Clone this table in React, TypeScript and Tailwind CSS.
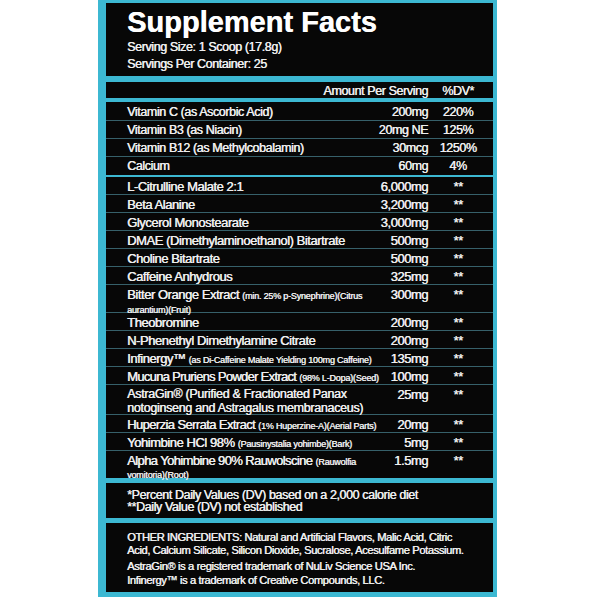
import React from "react";

type R = {
  n: React.ReactNode;
  l2?: React.ReactNode;
  a: string;
  d: string;
  tall?: "h-[28px]" | "h-[30px]" | "h-[26px]";
  l1c?: string;
  l2c?: string;
};

const S = ({ children }: { children: React.ReactNode }) => (
  <span className="text-[9px] tracking-[-0.2px]">{children}</span>
);

const vit: R[] = [
  { n: "Vitamin C (as Ascorbic Acid)", a: "200mg", d: "220%" },
  { n: "Vitamin B3 (as Niacin)", a: "20mg NE", d: "125%" },
  { n: "Vitamin B12 (as Methylcobalamin)", a: "30mcg", d: "1250%" },
  { n: "Calcium", a: "60mg", d: "4%" },
];

const ing: R[] = [
  { n: "L-Citrulline Malate 2:1", a: "6,000mg", d: "**" },
  { n: "Beta Alanine", a: "3,200mg", d: "**" },
  { n: "Glycerol Monostearate", a: "3,000mg", d: "**" },
  { n: "DMAE (Dimethylaminoethanol) Bitartrate", a: "500mg", d: "**" },
  { n: "Choline Bitartrate", a: "500mg", d: "**" },
  { n: "Caffeine Anhydrous", a: "325mg", d: "**" },
  {
    n: (
      <>
        Bitter Orange Extract <S>(min. 25% p-Synephrine)(Citrus</S>
      </>
    ),
    l2: <S>aurantium)(Fruit)</S>,
    a: "300mg",
    d: "**",
    tall: "h-[28px]",
    l1c: "pt-[3px] leading-[13px]",
    l2c: "leading-[11px]",
  },
  { n: "Theobromine", a: "200mg", d: "**" },
  { n: "N-Phenethyl Dimethylamine Citrate", a: "200mg", d: "**" },
  {
    n: (
      <>
        Infinergy™ <S>(as Di-Caffeine Malate Yielding 100mg Caffeine)</S>
      </>
    ),
    a: "135mg",
    d: "**",
  },
  {
    n: (
      <>
        <span className="tracking-[-0.7px]">Mucuna Pruriens Powder Extract</span>{" "}
        <S>(98% L-Dopa)(Seed)</S>
      </>
    ),
    a: "100mg",
    d: "**",
  },
  {
    n: "AstraGin® (Purified & Fractionated Panax",
    l2: "notoginseng and Astragalus membranaceus)",
    a: "25mg",
    d: "**",
    tall: "h-[30px]",
    l1c: "pt-[2px] leading-[14px] text-[12.5px] tracking-[-0.3px]",
    l2c: "leading-[14px] text-[12.5px] tracking-[-0.3px]",
  },
  {
    n: (
      <>
        <span className="tracking-[-0.6px]">Huperzia Serrata Extract</span>{" "}
        <S>(1% Huperzine-A)(Aerial Parts)</S>
      </>
    ),
    a: "20mg",
    d: "**",
  },
  {
    n: (
      <>
        Yohimbine HCl 98% <S>(Pausinystalia yohimbe)(Bark)</S>
      </>
    ),
    a: "5mg",
    d: "**",
  },
  {
    n: (
      <>
        <span className="tracking-[-0.6px]">Alpha Yohimbine 90% Rauwolscine</span>{" "}
        <S>(Rauwolfia</S>
      </>
    ),
    l2: <S>vomitoria)(Root)</S>,
    a: "1.5mg",
    d: "**",
    tall: "h-[26px]",
    l1c: "pt-[3px] leading-[13px]",
    l2c: "leading-[10px]",
  },
];

function Row({ r, last, vitRow }: { r: R; last?: boolean; vitRow?: boolean }) {
  const size = vitRow ? "text-[12.5px] tracking-[-0.4px]" : "text-[13px] tracking-[-0.45px]";
  const line = last ? "" : " border-b border-[#36606a]";
  if (r.tall) {
    return (
      <div className={"flex pl-[21px] pr-[5px] " + r.tall + " " + size + line}>
        <div className="flex-1 min-w-0 whitespace-nowrap">
          <div className={r.l1c}>{r.n}</div>
          <div className={r.l2c}>{r.l2}</div>
        </div>
        <div className="w-[70px] text-right pt-[3px] leading-[13px]">{r.a}</div>
        <div className="w-[60px] text-center pt-[3px] leading-[13px]">{r.d}</div>
      </div>
    );
  }
  return (
    <div className={"flex h-[18px] pl-[21px] pr-[5px] " + size + line}>
      <div className="flex-1 min-w-0 whitespace-nowrap pt-[1px] leading-[17px]">{r.n}</div>
      <div className="w-[70px] text-right pt-[1px] leading-[17px]">{r.a}</div>
      <div className="w-[60px] text-center pt-[1px] leading-[17px]">{r.d}</div>
    </div>
  );
}

export default function App() {
  return (
    <div className="w-[600px] h-[600px] bg-white font-['Liberation_Sans',Arial,sans-serif] text-[12.5px] tracking-[-0.4px] text-[#eeeeee] [text-shadow:0.4px_0_0_#eeeeee]">
      <div className="ml-[98px] w-[399px] bg-[#3cb8d2] pt-[3px] pl-[8px] pr-[4px] pb-[5px] flex flex-col">
        {/* Title */}
        <div className="h-[73px] bg-[#070707] pl-[21px] pt-[5px]">
          <div className="font-bold text-[29px] leading-[29px] tracking-normal text-white">
            Supplement Facts
          </div>
          <div className="mt-[2px] leading-[16.5px]">Serving Size: 1 Scoop (17.8g)</div>
          <div className="leading-[16.5px]">Servings Per Container: 25</div>
        </div>
        {/* Header */}
        <div className="mt-[6px] h-[16px] bg-[#070707] flex pl-[21px] pr-[5px] pt-[1px] leading-[16px]">
          <div className="flex-1" />
          <div className="text-right">Amount Per Serving</div>
          <div className="w-[60px] text-center">%DV*</div>
        </div>
        {/* Table */}
        <div className="mt-[4px] h-[376px] bg-[#070707] pt-[1px] flex flex-col">
          {vit.map((r, i) => (
            <Row key={i} r={r} vitRow last={i === vit.length - 1} />
          ))}
          <div className="h-[2px] bg-[#3cb8d2]" />
          {ing.map((r, i) => (
            <Row key={i} r={r} last={i === ing.length - 1} />
          ))}
        </div>
        {/* Footnote */}
        <div className="mt-[5px] h-[35px] bg-[#070707] pl-[21px] pt-[5.5px] leading-[12.5px] whitespace-nowrap">
          <div>*Percent Daily Values (DV) based on a 2,000 calorie diet</div>
          <div>**Daily Value (DV) not established</div>
        </div>
        {/* Other ingredients */}
        <div className="mt-[5px] h-[69px] bg-[#070707] pl-[21px] pt-[7.5px] text-[11.2px] leading-[13.3px] whitespace-nowrap">
          <div>
            OTHER INGREDIENTS: Natural and Artificial Flavors, Malic Acid, Citric
            <br />
            Acid, Calcium Silicate, Silicon Dioxide, Sucralose, Acesulfame Potassium.
          </div>
          <div className="mt-[3.4px]">
            AstraGin® is a registered trademark of NuLiv Science USA Inc.
            <br />
            Infinergy™ is a trademark of Creative Compounds, LLC.
          </div>
        </div>
      </div>
    </div>
  );
}
